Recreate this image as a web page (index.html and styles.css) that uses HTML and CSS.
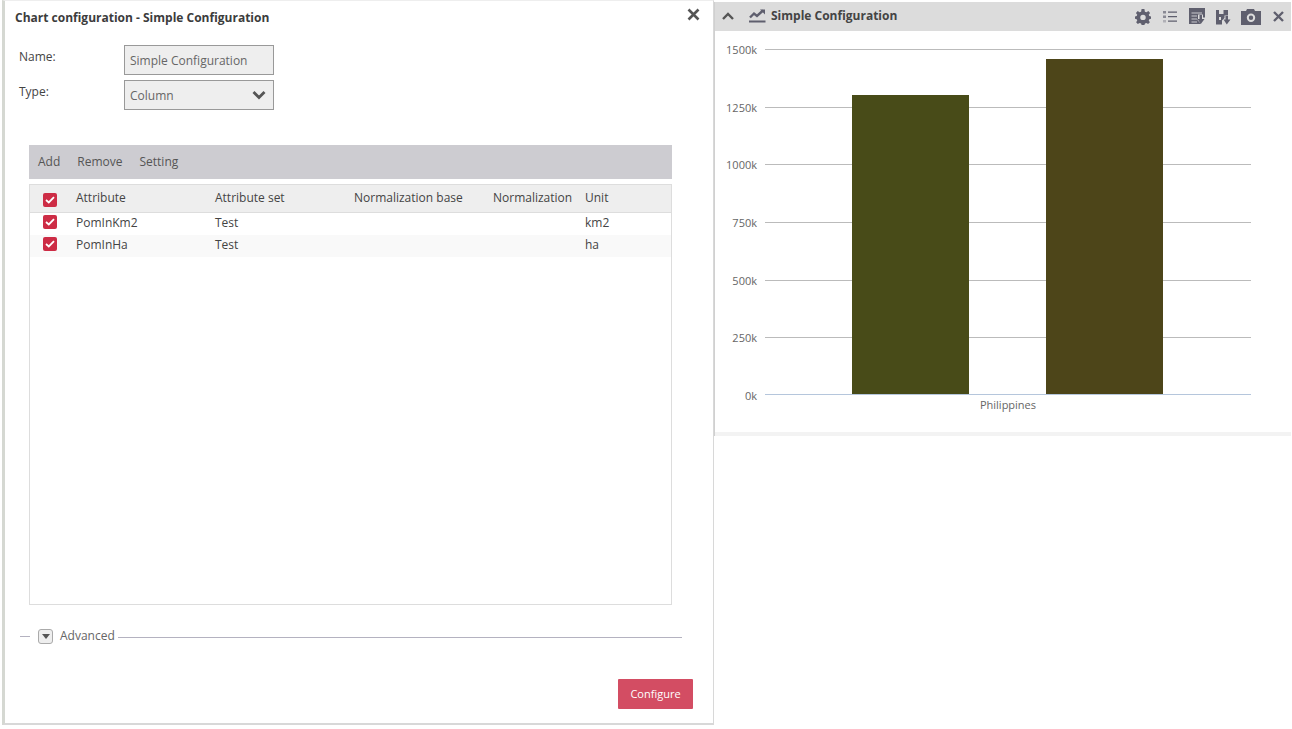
FILE: index.html
```html
<!DOCTYPE html>
<html>

<head>
    <title>Chart configuration</title>
    <link rel="stylesheet" href="styles.css">
</head>

<body>
    <div class="desktop">
        <div class="dialog">
            <div class="dialog-title">
                <span>Chart configuration - Simple Configuration</span>
                <svg class="dialog-close" width="13" height="13" viewBox="0 0 13 13">
                    <path d="M1.5 1.5L11.5 11.5M11.5 1.5L1.5 11.5" stroke="#555" stroke-width="2.6" />
                </svg>
            </div>
            <div class="fields">
                <label class="field-label">Name:</label>
                <div class="field-box">Simple Configuration</div>
                <label class="field-label">Type:</label>
                <div class="field-box field-select">
                    <span>Column</span>
                    <svg width="14" height="10" viewBox="0 0 14 10">
                        <path d="M1.5 2L7 7.5L12.5 2" fill="none" stroke="#555" stroke-width="2.8" />
                    </svg>
                </div>
            </div>
            <div class="toolbar">
                <span>Add</span>
                <span>Remove</span>
                <span>Setting</span>
            </div>
            <div class="grid-wrap">
                <table class="grid">
                    <colgroup>
                        <col class="col-check">
                        <col class="col-name">
                        <col class="col-name">
                        <col class="col-name">
                        <col class="col-norm">
                        <col>
                    </colgroup>
                    <thead>
                        <tr>
                            <th><span class="check"><svg width="10" height="8" viewBox="0 0 10 8"><path d="M1 4L3.8 6.5L9 1.2" fill="none" stroke="#fff" stroke-width="1.8" /></svg></span></th>
                            <th>Attribute</th>
                            <th>Attribute set</th>
                            <th>Normalization base</th>
                            <th>Normalization</th>
                            <th>Unit</th>
                        </tr>
                    </thead>
                    <tbody>
                        <tr>
                            <td><span class="check"><svg width="10" height="8" viewBox="0 0 10 8"><path d="M1 4L3.8 6.5L9 1.2" fill="none" stroke="#fff" stroke-width="1.8" /></svg></span></td>
                            <td>PomInKm2</td>
                            <td>Test</td>
                            <td></td>
                            <td></td>
                            <td>km2</td>
                        </tr>
                        <tr class="alt">
                            <td><span class="check"><svg width="10" height="8" viewBox="0 0 10 8"><path d="M1 4L3.8 6.5L9 1.2" fill="none" stroke="#fff" stroke-width="1.8" /></svg></span></td>
                            <td>PomInHa</td>
                            <td>Test</td>
                            <td></td>
                            <td></td>
                            <td>ha</td>
                        </tr>
                    </tbody>
                </table>
            </div>
            <div class="advanced">
                <span class="advanced-dash"></span>
                <span class="advanced-toggle">
                    <svg width="8" height="5" viewBox="0 0 8 5"><path d="M0 0H8L4 5Z" fill="#555" /></svg>
                </span>
                <span class="advanced-text">Advanced</span>
                <span class="advanced-line"></span>
            </div>
            <div class="dialog-footer">
                <button type="button" class="configure">Configure</button>
            </div>
        </div>

        <div class="panel-column">
            <div class="panel">
                <div class="panel-head">
                    <svg class="panel-collapse" width="12" height="8" viewBox="0 0 12 8">
                        <path d="M1 7L6 2L11 7" fill="none" stroke="#555" stroke-width="2.4" />
                    </svg>
                    <svg class="panel-type" width="17" height="14" viewBox="0 0 17 14">
                        <path d="M1 8.5L5 4.5L8 7L14 1.5" fill="none" stroke="#5f5f6e" stroke-width="2.4" />
                        <path d="M11 0.5H16V5.5Z" fill="#5f5f6e" />
                        <rect x="0" y="11.5" width="16.5" height="2" fill="#5f5f6e" />
                    </svg>
                    <span class="panel-title">Simple Configuration</span>
                    <div class="panel-tools">
                        <svg width="16" height="16" viewBox="0 0 17 17">
                            <path fill-rule="evenodd" fill="#5f5f6e" d="M7 0H10L10.5 2.8L12.2 3.5L14.2 2.2L16 4.3L14.6 6.2L15.2 7.4L17 8V10.4L15.2 11L14.6 12.3L15.8 14.2L13.9 16L12.1 14.8L10.6 15.4L10 17H7L6.5 15.4L4.9 14.8L3 16L1.2 14.2L2.4 12.3L1.8 11L0 10.4V8L1.8 7.4L2.4 6.2L1 4.3L2.9 2.2L4.8 3.5L6.5 2.8ZM8.5 6A2.9 2.9 0 1 0 8.5 11.8A2.9 2.9 0 1 0 8.5 6Z" />
                        </svg>
                        <svg width="14" height="12" viewBox="0 0 14 12">
                            <rect x="0" y="0" width="3" height="2.5" fill="#8a8a94" />
                            <rect x="0" y="4.5" width="3" height="2.5" fill="#8a8a94" />
                            <rect x="0" y="9" width="3" height="2.5" fill="#b0b0b6" />
                            <path d="M5 1.2H14M5 5.7H14M5 10.2H14" stroke="#5f5f6e" stroke-width="1.3" />
                        </svg>
                        <svg width="16" height="17" viewBox="0 0 16 17">
                            <rect width="16" height="16" fill="#5f5f6e" />
                            <path d="M2.5 5H13M2.5 8H8M2.5 11H8M2.5 14H8" stroke="#c9c9ce" stroke-width="1.2" />
                            <path fill="#dcdcdc" d="M9 6.5H14V9.5H16V16H12L8 11.5H9Z" />
                            <path fill="#5f5f6e" d="M10.5 7H13V11H15.5L11.8 16L8.5 11H10.5Z" />
                        </svg>
                        <svg class="tool-import" width="15" height="16" viewBox="0 0 15 16">
                            <path fill="#5f5f6e" d="M0 1H3V5H7.5V1H12V6.5H8.5V9L6 11.5V15.5H0ZM3 8V11H5V8Z" />
                            <path fill="#5f5f6e" d="M9.5 7H12V10.5H14.5L10.8 15.5L7.5 10.5H9.5Z" />
                        </svg>
                        <svg class="tool-camera" width="20" height="16" viewBox="0 0 20 16">
                            <path fill-rule="evenodd" fill="#5f5f6e" d="M0 2H5L6 0H13L14 2H20V16H0ZM10 4.5A4.2 4.2 0 1 0 10 12.9A4.2 4.2 0 1 0 10 4.5ZM10 6.5A2.2 2.2 0 1 1 10 10.9A2.2 2.2 0 1 1 10 6.5Z" />
                        </svg>
                        <svg width="11" height="11" viewBox="0 0 11 11">
                            <path d="M1 1L10 10M10 1L1 10" stroke="#5f5f6e" stroke-width="2.4" />
                        </svg>
                    </div>
                </div>
                <svg class="chart" width="576" height="401" viewBox="715 31 576 401">
                    <g class="chart-grid">
                        <line x1="765" x2="1251" y1="49.5" y2="49.5" />
                        <line x1="765" x2="1251" y1="107.5" y2="107.5" />
                        <line x1="765" x2="1251" y1="164.5" y2="164.5" />
                        <line x1="765" x2="1251" y1="222.5" y2="222.5" />
                        <line x1="765" x2="1251" y1="280.5" y2="280.5" />
                        <line x1="765" x2="1251" y1="337.5" y2="337.5" />
                    </g>
                    <line x1="765" x2="1251" y1="394.5" y2="394.5" stroke="#b5c6dc" />
                    <rect x="852" y="95" width="117" height="299" fill="#484b18" />
                    <rect x="1046" y="59" width="117" height="335" fill="#4d4519" />
                    <g class="chart-label">
                        <text x="757" y="54">1500k</text>
                        <text x="757" y="112">1250k</text>
                        <text x="757" y="169">1000k</text>
                        <text x="757" y="227">750k</text>
                        <text x="757" y="285">500k</text>
                        <text x="757" y="342">250k</text>
                        <text x="757" y="400">0k</text>
                    </g>
                    <text class="chart-category" x="1008" y="409">Philippines</text>
                </svg>
                <div class="panel-foot"></div>
            </div>
        </div>
    </div>
</body>

</html>
```
FILE: styles.css
```css
html,
body {
    margin: 0;
    height: 100%;
    background-color: white;
    overflow: hidden;
}

body {
    font-family: "Open Sans", sans-serif;
    font-size: 12px;
    color: #444;
}

.desktop {
    display: flex;
    align-items: flex-start;
    height: 729px;
}

.dialog {
    display: flex;
    flex-direction: column;
    box-sizing: border-box;
    width: 712px;
    height: 725px;
    margin-left: 2px;
    background-color: white;
    border-left: 3px solid #d5d8d2;
    border-right: 1px solid #d8d8d8;
    border-bottom: 2px solid #d8d8d8;
    border-top: 1px solid #eee;
}

.dialog-title {
    display: flex;
    justify-content: space-between;
    align-items: center;
    height: 31px;
    padding: 0 13px 0 10px;
    font-weight: 700;
    font-size: 12px;
    color: #3c3c3c;
}

.dialog-title span {
    margin-top: 2px;
}

.dialog-close {
    margin-bottom: 5px;
}

.fields {
    display: grid;
    grid-template-columns: 105px 150px;
    grid-template-rows: 30px 30px;
    row-gap: 5px;
    margin: 13px 0 0 14px;
}

.field-label {
    line-height: 24px;
}

.field-box {
    display: flex;
    justify-content: space-between;
    align-items: center;
    box-sizing: border-box;
    padding: 0 7px 0 5px;
    background-color: #eee;
    border: 1px solid #999;
    color: #666;
}

.toolbar {
    display: flex;
    align-items: center;
    gap: 17px;
    height: 34px;
    width: 643px;
    margin: 35px 0 0 24px;
    padding: 0 0 2px 9px;
    box-sizing: border-box;
    background-color: #cdccd1;
    color: #555;
}

.grid-wrap {
    box-sizing: border-box;
    width: 643px;
    height: 421px;
    margin: 5px 0 0 24px;
    border: 1px solid #ddd;
}

.grid {
    width: 100%;
    table-layout: fixed;
    border-collapse: collapse;
}

.col-check {
    width: 46px;
}

.col-name {
    width: 139px;
}

.col-norm {
    width: 92px;
}

.grid th {
    height: 25px;
    padding: 0 0 2px;
    text-align: left;
    font-weight: 400;
    background-color: #eee;
    border-bottom: 1px solid #ddd;
}

.grid th:first-child {
    padding: 2px 0 0;
}

.grid td {
    height: 18px;
    padding: 0 0 4px;
}

.grid .alt td {
    background-color: #f9f9f9;
}

.check {
    display: flex;
    justify-content: center;
    align-items: center;
    width: 14px;
    height: 14px;
    margin-left: 13px;
    border-radius: 2px;
    background-color: #cd2c45;
}

.advanced {
    display: flex;
    align-items: center;
    width: 662px;
    height: 16px;
    margin: 23px 0 0 15px;
}

.advanced-dash {
    width: 10px;
    margin-right: 8px;
    border-top: 1px solid #b4b2c0;
}

.advanced-toggle {
    display: flex;
    justify-content: center;
    align-items: center;
    box-sizing: border-box;
    width: 15px;
    height: 15px;
    background-color: #eee;
    border: 1px solid #aaa;
    border-radius: 3px;
}

.advanced-text {
    margin: 0 3px 2px 7px;
    color: #666;
}

.advanced-line {
    flex: 1;
    margin-top: 2px;
    border-top: 1px solid #b4b2c0;
}

.dialog-footer {
    display: flex;
    justify-content: flex-end;
    margin: 35px 20px 0 0;
}

.configure {
    width: 75px;
    height: 30px;
    padding: 0 0 2px;
    border: none;
    border-radius: 1px;
    background-color: #d34d63;
    color: white;
    font-family: inherit;
    font-size: 11px;
}

.panel-column {
    flex: 1;
    margin-top: 2px;
    margin-right: 1px;
}

.panel {
    border-left: 1px solid #d0d0d0;
}

.panel-head {
    display: flex;
    align-items: center;
    height: 29px;
    background-color: #dcdcdc;
}

.panel-collapse {
    margin-left: 7px;
    margin-bottom: 2px;
}

.panel-type {
    margin-left: 15px;
    margin-bottom: 2px;
}

.panel-title {
    margin: 0 0 2px 5px;
    font-weight: 700;
    color: #444;
}

.panel-tools {
    display: flex;
    align-items: center;
    gap: 12px;
    margin-left: auto;
    padding-right: 7px;
}

.tool-import {
    margin-left: -1px;
}

.tool-camera {
    margin-left: -2px;
}

.chart {
    display: block;
}

.chart-grid line {
    stroke: #bbb;
}

.chart-label text {
    text-anchor: end;
    fill: #666;
    font-size: 11px;
}

.chart-category {
    text-anchor: middle;
    fill: #666;
    font-size: 11px;
}

.panel-foot {
    height: 4px;
    background-color: #f3f3f3;
}
```
